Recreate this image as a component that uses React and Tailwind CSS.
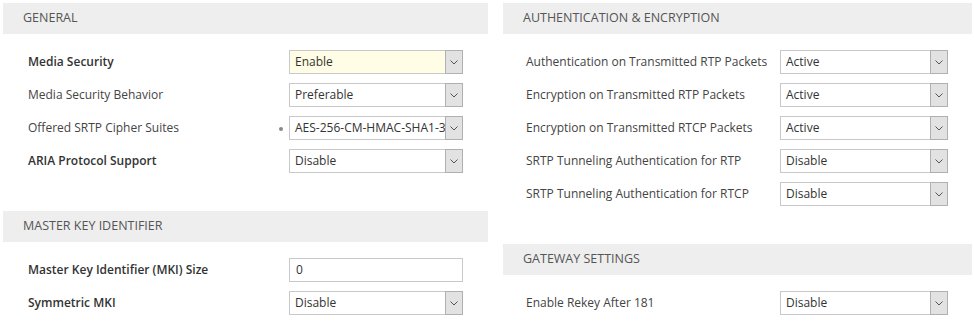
import React from 'react';

function Chevron() {
    return (
        <svg width="8" height="5" viewBox="0 0 8 5" fill="none">
            <path d="M0.5 0.5L4 4L7.5 0.5" stroke="#555" strokeWidth="1" />
        </svg>
    );
}

function Select({ value, width, highlight }) {
    return (
        <div
            className={`flex h-6 border border-[#c9c9c9] ${highlight ? 'bg-[#fffde5]' : 'bg-white'}`}
            style={{ width }}
        >
            <span className="flex-1 overflow-hidden whitespace-nowrap pl-[5px] leading-[22px] text-[#333]">
                {value}
            </span>
            <span className="-my-px -mr-px flex w-[18px] shrink-0 items-center justify-center border border-[#b0b0b0] bg-[#e2e2e2]">
                <Chevron />
            </span>
        </div>
    );
}

function TextInput({ value, width }) {
    return (
        <div className="flex h-6 items-center border border-[#c9c9c9] bg-white pl-[6px] text-[#333]" style={{ width }}>
            {value}
        </div>
    );
}

function Header({ title }) {
    return (
        <div className="flex h-[31px] items-center bg-[#eeeeee] pl-5 text-[12.5px] uppercase text-[#555]">{title}</div>
    );
}

function Row({ label, bold, labelWidth, dot, children }) {
    return (
        <div className="flex h-6 items-center">
            <div className={`relative shrink-0 ${bold ? 'font-semibold text-[#333]' : 'text-[#444]'}`} style={{ width: labelWidth }}>
                {label}
                {dot && <span className="absolute right-[6px] top-[8px] h-1 w-1 rounded-full bg-[#888]" />}
            </div>
            {children}
        </div>
    );
}

export default function App() {
    const leftLabel = 261;
    const rightLabel = 254;

    return (
        <div className="flex bg-white pt-[3px] pl-[3px] text-[12px] font-['Open_Sans',sans-serif]" style={{ width: 974, height: 322 }}>
            <div className="w-[485px] shrink-0">
                <Header title="General" />
                <div className="flex flex-col gap-[9px] pl-[25px] pt-[16px] pb-[38px]">
                    <Row label="Media Security" bold labelWidth={leftLabel}>
                        <Select value="Enable" width={174} highlight />
                    </Row>
                    <Row label="Media Security Behavior" labelWidth={leftLabel}>
                        <Select value="Preferable" width={174} />
                    </Row>
                    <Row label="Offered SRTP Cipher Suites" labelWidth={leftLabel} dot>
                        <Select value="AES-256-CM-HMAC-SHA1-32" width={174} />
                    </Row>
                    <Row label="ARIA Protocol Support" bold labelWidth={leftLabel}>
                        <Select value="Disable" width={174} />
                    </Row>
                </div>
                <Header title="Master Key Identifier" />
                <div className="flex flex-col gap-[9px] pl-[25px] pt-[16px]">
                    <Row label="Master Key Identifier (MKI) Size" bold labelWidth={leftLabel}>
                        <TextInput value="0" width={174} />
                    </Row>
                    <Row label="Symmetric MKI" bold labelWidth={leftLabel}>
                        <Select value="Disable" width={174} />
                    </Row>
                </div>
            </div>
            <div className="ml-[15px] w-[469px] shrink-0">
                <Header title="Authentication & Encryption" />
                <div className="flex flex-col gap-[9px] pl-[23px] pt-[16px] pb-[38px]">
                    <Row label="Authentication on Transmitted RTP Packets" labelWidth={rightLabel}>
                        <Select value="Active" width={168} />
                    </Row>
                    <Row label="Encryption on Transmitted RTP Packets" labelWidth={rightLabel}>
                        <Select value="Active" width={168} />
                    </Row>
                    <Row label="Encryption on Transmitted RTCP Packets" labelWidth={rightLabel}>
                        <Select value="Active" width={168} />
                    </Row>
                    <Row label="SRTP Tunneling Authentication for RTP" labelWidth={rightLabel}>
                        <Select value="Disable" width={168} />
                    </Row>
                    <Row label="SRTP Tunneling Authentication for RTCP" labelWidth={rightLabel}>
                        <Select value="Disable" width={168} />
                    </Row>
                </div>
                <Header title="Gateway Settings" />
                <div className="flex flex-col gap-[9px] pl-[23px] pt-[16px]">
                    <Row label="Enable Rekey After 181" labelWidth={rightLabel}>
                        <Select value="Disable" width={168} />
                    </Row>
                </div>
            </div>
        </div>
    );
}
